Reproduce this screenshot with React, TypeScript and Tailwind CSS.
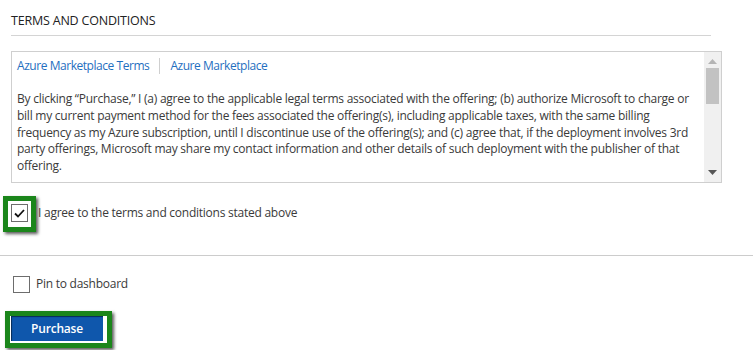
import React from "react";

const font = { fontFamily: '"Open Sans", "Noto Sans", sans-serif' };

function GreenFrame({ children, className }: { children: React.ReactNode; className?: string }) {
  return (
    <div className={"border-[5px] border-[#1b861b] shadow-[2px_2px_3px_rgba(0,0,0,0.65)] " + (className ?? "")}>
      {children}
    </div>
  );
}

function Scrollbar() {
  return (
    <div className="w-[17px] bg-[#f0f0f0] flex flex-col items-center justify-between py-[7px]">
      <div className="flex flex-col items-center w-full">
        <svg width="9" height="5" viewBox="0 0 9 5">
          <path d="M0 5 L4.5 0 L9 5 Z" fill="#b4b4b4" />
        </svg>
        <div className="mt-[4px] w-[13px] h-[36px] bg-[#c2c2c2]" />
      </div>
      <svg width="9" height="5" viewBox="0 0 9 5">
        <path d="M0 0 L9 0 L4.5 5 Z" fill="#555" />
      </svg>
    </div>
  );
}

export default function App() {
  return (
    <div className="w-[753px] h-[350px] bg-white overflow-hidden text-[#333]" style={font}>
      <div className="pl-[11px]">
        <div className="pt-[13px] text-[12.5px] leading-[16px] tracking-[-0.2px] text-[#222]">TERMS AND CONDITIONS</div>
        <div className="mt-[6px] w-[700px] border-b border-[#d4d4d4]" />

        <div className="mt-[15px] w-[711px] h-[132px] border border-[#cfcfcf] flex">
          <div className="flex-1 pl-[5px] pt-[6px] text-[12px] tracking-[-0.25px]">
            <div className="flex items-center leading-[16px] text-[#1f6fc0] tracking-[-0.45px]">
              <span>Azure Marketplace Terms</span>
              <span className="mx-[10px] w-px h-[16px] bg-[#cfcfcf]" />
              <span>Azure Marketplace</span>
            </div>
            <p className="mt-[17px] leading-[16.8px] whitespace-nowrap text-[#3a3a3a]">
              By clicking “Purchase,” I (a) agree to the applicable legal terms associated with the offering; (b) authorize Microsoft to charge or
              <br />
              bill my current payment method for the fees associated the offering(s), including applicable taxes, with the same billing
              <br />
              frequency as my Azure subscription, until I discontinue use of the offering(s); and (c) agree that, if the deployment involves 3rd
              <br />
              party offerings, Microsoft may share my contact information and other details of such deployment with the publisher of that
              <br />
              offering.
            </p>
          </div>
          <Scrollbar />
        </div>

        <div className="mt-[13px] flex items-center">
          <GreenFrame className="-ml-[8px] pt-[3px] pl-[3px] pr-[3px] pb-[5px] bg-white">
            <div className="w-[17px] h-[18px] border border-[#6d6d6d] bg-white flex items-center justify-center">
              <svg width="11" height="9" viewBox="0 0 11 9">
                <path d="M1 4.5 L4 7.5 L10 1" stroke="#111" strokeWidth="1.8" fill="none" />
              </svg>
            </div>
          </GreenFrame>
          <span className="ml-[2px] -mt-[2px] text-[12px] tracking-[-0.25px] text-[#3a3a3a]">I agree to the terms and conditions stated above</span>
        </div>
      </div>

      <div className="mt-[23px] border-b border-[#cccccc]" />

      <div className="pl-[13px] mt-[19px] flex items-center">
        <div className="w-[17px] h-[17px] border border-[#6d6d6d]" />
        <span className="ml-[6px] text-[12px] tracking-[-0.25px] text-[#3a3a3a]">Pin to dashboard</span>
      </div>

      <div className="pl-[5px] mt-[18px]">
        <GreenFrame className="inline-block border-[4px] pl-[1px] pr-[4px] pb-[2px] bg-white">
          <div className="w-[92px] h-[25px] bg-[#0f57ac] shadow-[inset_1px_1px_1px_rgba(0,0,0,0.5)] flex items-center justify-center text-white text-[12px] font-semibold tracking-[-0.2px]">
            Purchase
          </div>
        </GreenFrame>
      </div>
    </div>
  );
}
